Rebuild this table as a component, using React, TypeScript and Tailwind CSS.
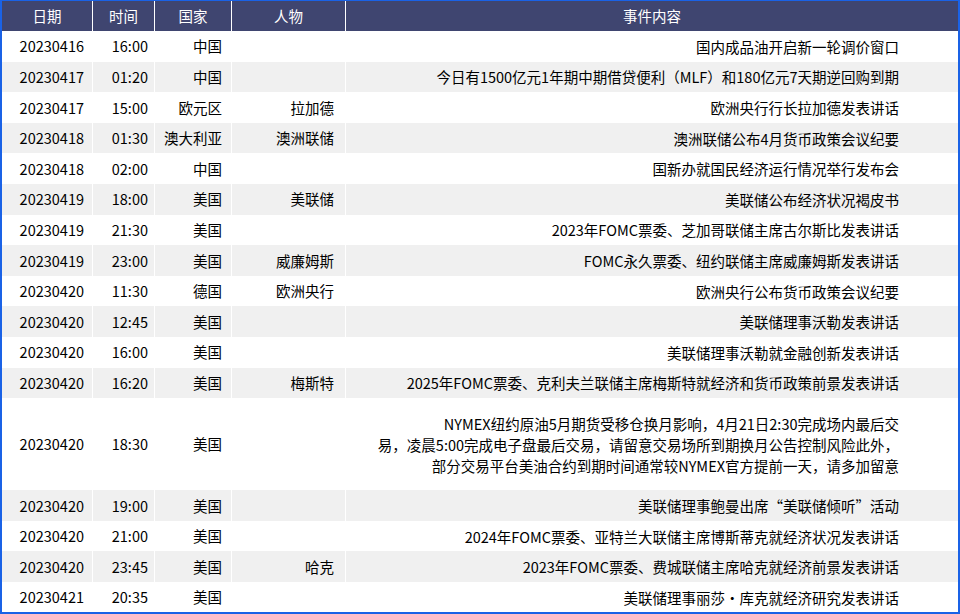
import React from "react";

type Row = {
  date: string;
  time: string;
  country: string;
  person: string;
  event: string[];
};

const rows: Row[] = [
  { date: "20230416", time: "16:00", country: "中国", person: "", event: ["国内成品油开启新一轮调价窗口"] },
  { date: "20230417", time: "01:20", country: "中国", person: "", event: ["今日有1500亿元1年期中期借贷便利（MLF）和180亿元7天期逆回购到期"] },
  { date: "20230417", time: "15:00", country: "欧元区", person: "拉加德", event: ["欧洲央行行长拉加德发表讲话"] },
  { date: "20230418", time: "01:30", country: "澳大利亚", person: "澳洲联储", event: ["澳洲联储公布4月货币政策会议纪要"] },
  { date: "20230418", time: "02:00", country: "中国", person: "", event: ["国新办就国民经济运行情况举行发布会"] },
  { date: "20230419", time: "18:00", country: "美国", person: "美联储", event: ["美联储公布经济状况褐皮书"] },
  { date: "20230419", time: "21:30", country: "美国", person: "", event: ["2023年FOMC票委、芝加哥联储主席古尔斯比发表讲话"] },
  { date: "20230419", time: "23:00", country: "美国", person: "威廉姆斯", event: ["FOMC永久票委、纽约联储主席威廉姆斯发表讲话"] },
  { date: "20230420", time: "11:30", country: "德国", person: "欧洲央行", event: ["欧洲央行公布货币政策会议纪要"] },
  { date: "20230420", time: "12:45", country: "美国", person: "", event: ["美联储理事沃勒发表讲话"] },
  { date: "20230420", time: "16:00", country: "美国", person: "", event: ["美联储理事沃勒就金融创新发表讲话"] },
  { date: "20230420", time: "16:20", country: "美国", person: "梅斯特", event: ["2025年FOMC票委、克利夫兰联储主席梅斯特就经济和货币政策前景发表讲话"] },
  {
    date: "20230420",
    time: "18:30",
    country: "美国",
    person: "",
    event: [
      "NYMEX纽约原油5月期货受移仓换月影响，4月21日2:30完成场内最后交",
      "易，凌晨5:00完成电子盘最后交易，请留意交易场所到期换月公告控制风险此外，",
      "部分交易平台美油合约到期时间通常较NYMEX官方提前一天，请多加留意",
    ],
  },
  { date: "20230420", time: "19:00", country: "美国", person: "", event: ["美联储理事鲍曼出席“美联储倾听”活动"] },
  { date: "20230420", time: "21:00", country: "美国", person: "", event: ["2024年FOMC票委、亚特兰大联储主席博斯蒂克就经济状况发表讲话"] },
  { date: "20230420", time: "23:45", country: "美国", person: "哈克", event: ["2023年FOMC票委、费城联储主席哈克就经济前景发表讲话"] },
  { date: "20230421", time: "20:35", country: "美国", person: "", event: ["美联储理事丽莎・库克就经济研究发表讲话"] },
];

const cols = "grid grid-cols-[90px_61px_76px_113px_1fr] gap-x-px";

const App = () => {
  return (
    <div
      className="w-[960px] h-[614px] bg-white border-x-2 border-t border-b-2 border-[#1a62e6] overflow-hidden text-black"
      style={{ fontFamily: '"Noto Sans CJK SC", "Liberation Sans", sans-serif' }}
    >
      {/* Header */}
      <div className={`${cols} h-[30px] text-white text-[14.5px]`}>
        <div className="bg-[#3f4570] flex items-center justify-center">日期</div>
        <div className="bg-[#3f4570] flex items-center justify-center">时间</div>
        <div className="bg-[#3f4570] flex items-center justify-center">国家</div>
        <div className="bg-[#3f4570] flex items-center justify-center">人物</div>
        <div className="bg-[#3f4570] flex items-center justify-center">事件内容</div>
      </div>

      {/* Rows */}
      {rows.map((r, i) => {
        const bg = i % 2 === 1 ? "bg-[#f0f0f0]" : "bg-white";
        const tall = r.event.length > 1;
        return (
          <div
            key={i}
            className={`${cols} ${tall ? "h-[92px]" : "h-[30.6px]"} text-[14.5px]`}
          >
            <div className={`${bg} flex items-center justify-end pr-2`}>{r.date}</div>
            <div className={`${bg} flex items-center justify-end pr-1.5`}>{r.time}</div>
            <div className={`${bg} flex items-center justify-end pr-[9px]`}>{r.country}</div>
            <div className={`${bg} flex items-center justify-end pr-[11px]`}>{r.person}</div>
            <div className={`${bg} flex items-center justify-end pr-[59px]`}>
              <div className="text-right leading-[21px] whitespace-nowrap">
                {r.event.map((line, j) => (
                  <div key={j}>{line}</div>
                ))}
              </div>
            </div>
          </div>
        );
      })}
    </div>
  );
};

export default App;
